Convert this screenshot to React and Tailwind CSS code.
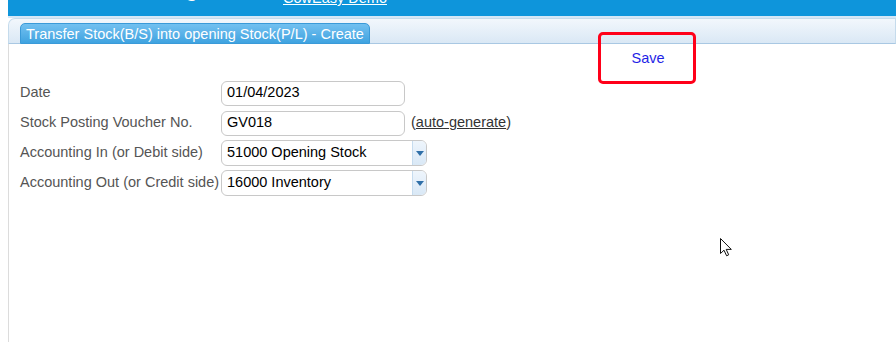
export default function App() {
  const rows = [
    { label: 'Date', value: '01/04/2023', kind: 'input' },
    { label: 'Stock Posting Voucher No.', value: 'GV018', kind: 'input', extra: true },
    { label: 'Accounting In (or Debit side)', value: '51000 Opening Stock', kind: 'select' },
    { label: 'Accounting Out (or Credit side)', value: '16000 Inventory', kind: 'select' },
  ];

  return (
    <div className="h-[342px] overflow-hidden bg-white pl-2 font-['Liberation_Sans',Arial,sans-serif] flex flex-col">
      {/* header bar, mostly scrolled off */}
      <div className="h-4 shrink-0 bg-[#0e95db] overflow-hidden flex items-start text-white">
        <span className="w-[190px] text-right font-bold text-[20px] leading-none -mt-[20px]">Accounting</span>
        <a className="ml-[85px] text-[14.5px] leading-none -mt-[9px] underline">CowEasy Demo</a>
      </div>
      <div className="h-[2px] shrink-0 bg-[#d4e7f6]" />

      {/* tab strip */}
      <div className="h-[26px] shrink-0 flex items-end rounded-tl-[7px] border border-[#c5dbec] border-b-[#a9c8e3] bg-gradient-to-b from-[#f2f7fc] to-[#dae8f5]">
        <div className="ml-[11px] h-[21px] px-[5px] -mb-px rounded-t-[5px] border border-[#3a9ad8] bg-gradient-to-b from-[#72c0f0] to-[#3ea3e0] text-white text-[14.5px] leading-[20px]">
          Transfer Stock(B/S) into opening Stock(P/L) - Create
        </div>
      </div>

      {/* content */}
      <div className="relative flex-1 border-l border-[#dcdcdc]">
        <div className="absolute left-[589px] -top-[12px] z-10 w-[98px] h-[52px] rounded-[5px] border-[3px] border-[#ff0019] flex items-center justify-center">
          <a className="text-[14.5px] text-[#1f1fe6] mt-[1px] ml-[2px]">Save</a>
        </div>

        <div className="pt-[36px] pl-[11px] grid grid-cols-[201px_auto] gap-y-[4px] text-[14.5px] w-fit">
          {rows.map((r) => (
            <div key={r.label} className="contents">
              <div className="text-[#555] flex items-center h-[26px] whitespace-nowrap">{r.label}</div>
              <div className="flex items-center">
                {r.kind === 'input' ? (
                  <div className="w-[184px] h-[25px] rounded-[6px] border border-[#c8c8c8] px-[5px] flex items-center text-black">
                    {r.value}
                  </div>
                ) : (
                  <div className="w-[206px] h-[26px] rounded-[6px] border border-[#c8c8c8] flex items-stretch text-black overflow-hidden">
                    <span className="flex-1 px-[5px] flex items-center">{r.value}</span>
                    <span className="w-[14px] border-l border-[#c6dcef] bg-gradient-to-b from-[#eef5fc] to-[#d9e8f6] flex items-center justify-center">
                      <svg width="8" height="5" viewBox="0 0 8 5">
                        <path d="M0 0h8L4 5z" fill="#2f6fa8" />
                      </svg>
                    </span>
                  </div>
                )}
                {r.extra && (
                  <span className="ml-[6px] text-[#333]">
                    (<span className="underline">auto-generate</span>)
                  </span>
                )}
              </div>
            </div>
          ))}
        </div>

        {/* mouse pointer */}
        <svg className="absolute left-[711px] top-[194px]" width="13" height="19" viewBox="0 0 13 19">
          <path d="M0.5 0.5V15.5L4 12.2L6.6 17.8L8.7 16.8L6.2 11.4H11.3Z" fill="#fff" stroke="#111" strokeWidth="1" strokeLinejoin="round" />
        </svg>
      </div>
    </div>
  );
}
